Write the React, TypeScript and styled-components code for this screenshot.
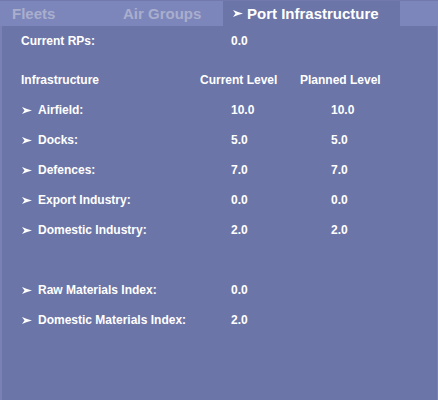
import React from "react";
import styled, { createGlobalStyle } from "styled-components";

const Global = createGlobalStyle`
  html, body { margin: 0; padding: 0; background: #6c75a7; }
  body { font-family: "Liberation Sans", Arial, sans-serif; }
`;

const Panel = styled.div`
  width: 438px;
  height: 400px;
  box-sizing: border-box;
  background: #6c75a7;
  border-left: 2px solid #7a82b5;
  border-right: 1px solid #7a82b5;
  display: flex;
  flex-direction: column;
`;

const TabBar = styled.div`
  display: flex;
  height: 26px;
  background: #7d86bb;
  border-top: 1px solid #727aad;
  box-sizing: border-box;
  margin-left: -2px;
  margin-right: -1px;
`;

const Tab = styled.div<{ $w: number; $active?: boolean }>`
  width: ${(p) => p.$w}px;
  box-sizing: border-box;
  padding-left: ${(p) => (p.$active ? 9 : 12)}px;
  display: flex;
  align-items: center;
  gap: 3px;
  font-size: 15px;
  font-weight: bold;
  color: ${(p) => (p.$active ? "#ffffff" : "#a9aecd")};
  background: ${(p) => (p.$active ? "#6c75a7" : "transparent")};
`;

const Content = styled.div`
  display: flex;
  flex-direction: column;
  padding-left: 19px;
`;

const Row = styled.div<{ $gapTop?: number }>`
  display: grid;
  grid-template-columns: 179px 100px 100px;
  height: 30px;
  align-items: center;
  margin-top: ${(p) => p.$gapTop ?? 0}px;
  font-size: 12px;
  font-weight: bold;
  color: #ffffff;
`;

const Label = styled.div`
  display: flex;
  align-items: center;
`;

const ArrowBox = styled.span`
  width: 17px;
  box-sizing: border-box;
  display: flex;
  align-items: center;
  padding-left: 1px;
`;

const Value = styled.div`
  padding-left: 31px;
`;

const Heading = styled.div``;

const Arrowhead = ({ w = 10 }: { w?: number }) => (
  <svg width={w} height={7} viewBox="0 0 10 7">
    <polygon points="0,0 5,2 10,3.5 5,5 0,7 2.5,3.5" fill="#ffffff" />
  </svg>
);

const Bullet = () => (
  <ArrowBox>
    <Arrowhead />
  </ArrowBox>
);

const infra = [
  ["Airfield:", "10.0", "10.0"],
  ["Docks:", "5.0", "5.0"],
  ["Defences:", "7.0", "7.0"],
  ["Export Industry:", "0.0", "0.0"],
  ["Domestic Industry:", "2.0", "2.0"],
];

export default function App() {
  return (
    <>
      <Global />
      <Panel>
        <TabBar>
          <Tab $w={111}>Fleets</Tab>
          <Tab $w={112}>Air Groups</Tab>
          <Tab $w={177} $active>
            <Arrowhead w={12} />
            Port Infrastructure
          </Tab>
        </TabBar>
        <Content>
          <Row>
            <Label>Current RPs:</Label>
            <Value>0.0</Value>
          </Row>
          <Row $gapTop={9}>
            <Heading>Infrastructure</Heading>
            <Heading>Current Level</Heading>
            <Heading>Planned Level</Heading>
          </Row>
          {infra.map(([name, cur, plan]) => (
            <Row key={name}>
              <Label>
                <Bullet />
                {name}
              </Label>
              <Value>{cur}</Value>
              <Value>{plan}</Value>
            </Row>
          ))}
          <Row $gapTop={30}>
            <Label>
              <Bullet />
              Raw Materials Index:
            </Label>
            <Value>0.0</Value>
          </Row>
          <Row>
            <Label>
              <Bullet />
              Domestic Materials Index:
            </Label>
            <Value>2.0</Value>
          </Row>
        </Content>
      </Panel>
    </>
  );
}
